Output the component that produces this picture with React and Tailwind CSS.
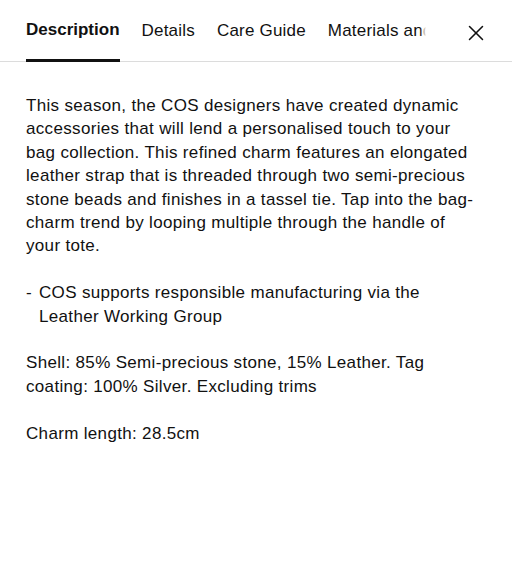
import { X } from "lucide-react";

const tabs = ["Description", "Details", "Care Guide", "Materials and Suppliers"];

export default function App() {
  return (
    <div
      className="w-[512px] h-[575px] bg-white text-[#111] overflow-hidden"
      style={{ fontFamily: '"Liberation Sans", Arial, sans-serif' }}
    >
      {/* barra de pestañas */}
      <div className="flex items-start border-b border-[#dcdcdc] h-[62px]">
        <div className="relative flex gap-[22px] pl-[26px] w-[426px] overflow-hidden whitespace-nowrap">
          {tabs.map((t, i) => (
            <div
              key={t}
              className={
                i === 0
                  ? "pt-[19px] h-[62px] border-b-[3px] border-[#111] font-bold text-[17px] leading-[22px] shrink-0"
                  : "pt-[20px] h-[62px] text-[17px] leading-[22px] tracking-[0.2px] shrink-0"
              }
            >
              {t}
            </div>
          ))}
          {/* desvanecido al borde */}
          <div className="absolute right-0 top-0 h-[58px] w-[6px] bg-gradient-to-r from-white/0 to-white" />
        </div>
        <button className="ml-auto mr-[23px] mt-[20px] text-[#111]">
          <X size={26} strokeWidth={1.4} />
        </button>
      </div>

      {/* contenido */}
      <div className="pl-[26px] pr-[30px] pt-[32px] text-[17px] leading-[23.4px] tracking-[0.33px] space-y-[23.4px]">
        <p>
          This season, the COS designers have created dynamic accessories that
          will lend a personalised touch to your bag collection. This refined
          charm features an elongated leather strap that is threaded through
          two semi-precious stone beads and finishes in a tassel tie. Tap into
          the bag-charm trend by looping multiple through the handle of your
          tote.
        </p>
        <div className="flex">
          <span className="w-[13px] shrink-0">-</span>
          <span>
            COS supports responsible manufacturing via the Leather Working Group
          </span>
        </div>
        <p>
          Shell: 85% Semi-precious stone, 15% Leather. Tag coating: 100%
          Silver. Excluding trims
        </p>
        <p>Charm length: 28.5cm</p>
      </div>
    </div>
  );
}
